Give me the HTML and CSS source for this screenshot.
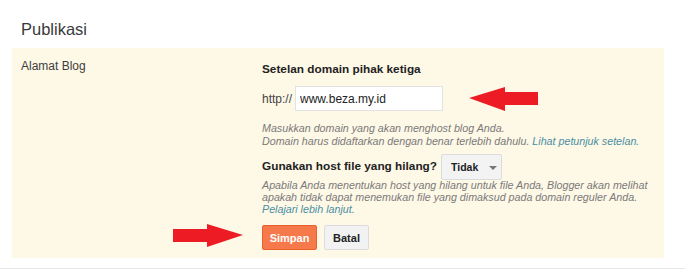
FILE: index.html
```html
<!DOCTYPE html>
<html lang="id">

<head>
    <meta charset="UTF-8">
    <meta name="viewport" content="width=device-width, initial-scale=1.0">
    <title>Publikasi</title>
    <link rel="stylesheet" href="styles.css">
</head>

<body>
    <h1 class="page-title">Publikasi</h1>

    <div class="panel">
        <div class="panel-label">Alamat Blog</div>

        <div class="panel-body">
            <h3 class="section-head">Setelan domain pihak ketiga</h3>

            <div class="domain-row">
                <span class="prefix">http://</span>
                <input type="text" class="domain-input" value="www.beza.my.id">
                <svg class="arrow-left" width="70" height="24" viewBox="0 0 70 24">
                    <polygon points="0,11 36,0 36,5 69,5 69,18 36,18 36,24" fill="#ed1c24" />
                </svg>
            </div>

            <p class="hint">
                Masukkan domain yang akan menghost blog Anda.<br>
                Domain harus didaftarkan dengan benar terlebih dahulu. <a href="#">Lihat petunjuk setelan.</a>
            </p>

            <div class="host-row">
                <span class="host-label">Gunakan host file yang hilang?</span>
                <button type="button" class="select-btn">Tidak <span class="caret"></span></button>
            </div>

            <p class="hint hint-tight">
                Apabila Anda menentukan host yang hilang untuk file Anda, Blogger akan melihat<br>
                apakah tidak dapat menemukan file yang dimaksud pada domain reguler Anda.<br>
                <a href="#">Pelajari lebih lanjut.</a>
            </p>

            <div class="actions">
                <svg class="arrow-right" width="70" height="24" viewBox="0 0 70 24">
                    <polygon points="0,5 34,5 34,0 70,11 34,23 34,18 0,18" fill="#ed1c24" />
                </svg>
                <button type="button" class="btn btn-primary">Simpan</button>
                <button type="button" class="btn">Batal</button>
            </div>
        </div>
    </div>

    <div class="rule"></div>
</body>

</html>
```

FILE: styles.css
```css
body {
    font-family: "Liberation Sans", Arial, sans-serif;
    font-size: 12px;
    color: #333333;
    background-color: #ffffff;
    margin: 0;
}

.page-title {
    margin: 0 0 9px 0;
    padding: 19px 0 0 21px;
    font-size: 16.5px;
    line-height: 20px;
    font-weight: normal;
    color: #3a3a3a;
}

.panel {
    display: flex;
    margin-left: 12px;
    width: 652px;
    background-color: #fef8e7;
}

.panel-label {
    width: 241px;
    flex-shrink: 0;
    padding: 11px 0 0 9px;
    line-height: 15px;
    color: #3d3d3d;
}

.panel-body {
    flex: 1;
    padding: 14px 0 8px 0;
}

.section-head {
    margin: 0 0 9px 0;
    font-size: 11.8px;
    line-height: 15px;
    color: #222222;
}

.domain-row {
    display: flex;
    align-items: center;
    height: 25px;
}

.prefix {
    color: #444444;
}

.domain-input {
    box-sizing: border-box;
    width: 148px;
    height: 25px;
    margin-left: 3px;
    padding: 0 0 0 4px;
    border: 1px solid #e2e2e2;
    font-family: "Liberation Sans", Arial, sans-serif;
    font-size: 12px;
    color: #222222;
    background-color: #ffffff;
}

.arrow-left {
    display: block;
    margin-left: 26px;
}

.hint {
    margin: 11px 0 0 0;
    font-size: 10.7px;
    line-height: 13px;
    font-style: italic;
    color: #7a7a7a;
}

.hint a {
    color: #4a8fa3;
    text-decoration: none;
}

.hint-tight {
    margin-top: -1px;
    line-height: 12px;
}

.host-row {
    display: flex;
    align-items: center;
    margin-top: 6px;
}

.host-label {
    font-size: 11.8px;
    font-weight: bold;
    color: #222222;
    margin-top: -2px;
}

.select-btn {
    display: flex;
    align-items: center;
    box-sizing: border-box;
    width: 61px;
    height: 26px;
    margin-left: 4px;
    padding: 0 0 0 9px;
    border: 1px solid #dcdcdc;
    border-radius: 2px;
    background-color: #f3f3f3;
    font-family: "Liberation Sans", Arial, sans-serif;
    font-size: 10.5px;
    font-weight: bold;
    color: #222222;
}

.caret {
    width: 0;
    height: 0;
    margin-left: 11px;
    margin-top: 2px;
    border-left: 4px solid transparent;
    border-right: 4px solid transparent;
    border-top: 4px solid #777777;
}

.actions {
    position: relative;
    display: flex;
    gap: 7px;
    margin-top: 10px;
}

.arrow-right {
    position: absolute;
    left: -89px;
    top: -1px;
}

.btn {
    box-sizing: border-box;
    width: 45px;
    height: 25px;
    padding: 0;
    border: 1px solid #dcdcdc;
    border-radius: 2px;
    background-color: #f2f2f2;
    font-family: "Liberation Sans", Arial, sans-serif;
    font-size: 11px;
    font-weight: bold;
    color: #222222;
}

.btn-primary {
    width: 55px;
    border-color: #e8602c;
    background-color: #f6794b;
    color: #ffffff;
}

.rule {
    margin-top: 10px;
    height: 1px;
    background-color: #e8e8e8;
}
```
